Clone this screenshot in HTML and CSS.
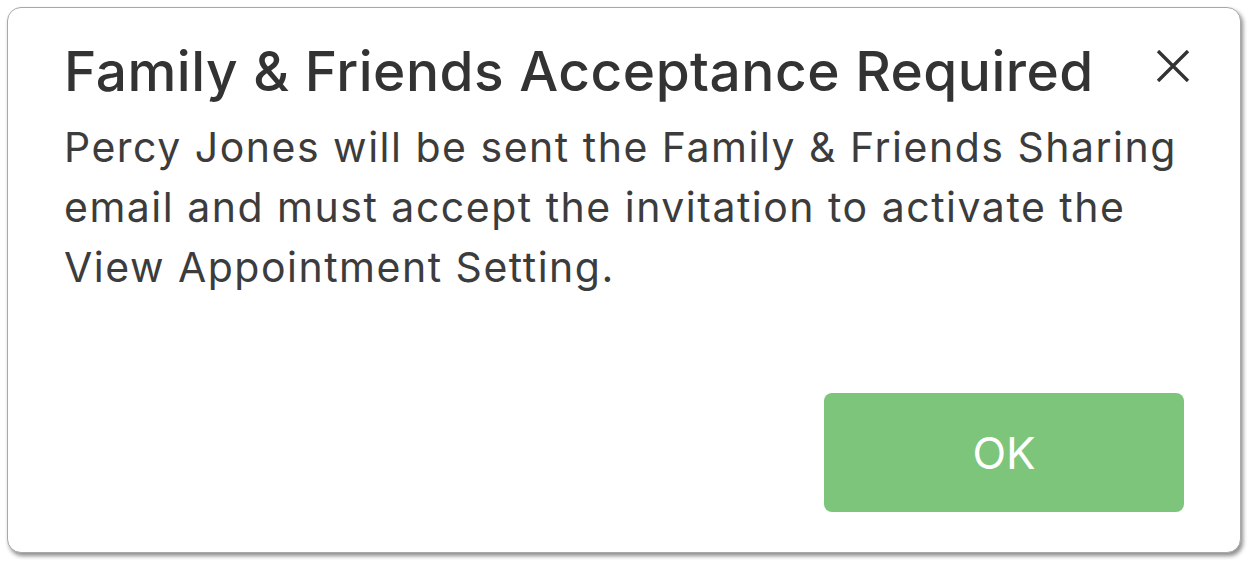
FILE: index.html
```html
<!DOCTYPE html>
<html lang="en">
<head>
    <meta charset="UTF-8">
    <meta name="viewport" content="width=device-width, initial-scale=1.0">
    <title>Family &amp; Friends Acceptance Required</title>
    <link rel="stylesheet" href="styles.css">
</head>
<body>
    <div class="dialog">
        <div class="dialog-header">
            <h2 class="dialog-title">Family &amp; Friends Acceptance Required</h2>
            <button class="close-button" aria-label="Close">
                <svg width="34" height="32" viewBox="0 0 34 32">
                    <path d="M2 1 L32 31 M32 1 L2 31" stroke="#333" stroke-width="3.4" fill="none"/>
                </svg>
            </button>
        </div>
        <p class="dialog-text">Percy Jones will be sent the Family &amp; Friends Sharing email and must accept the invitation to activate the View Appointment Setting.</p>
        <div class="dialog-footer">
            <button class="ok-button">OK</button>
        </div>
    </div>
</body>
</html>
```

FILE: styles.css
```css
body {
    margin: 0;
    padding: 7px;
    background-color: #ffffff;
    font-family: Inter, "Open Sans", sans-serif;
}
.dialog {
    box-sizing: border-box;
    width: 1234px;
    height: 546px;
    background-color: #fff;
    border: 1px solid #a8a8a8;
    border-radius: 14px;
    box-shadow: 2px 3px 4px rgba(0, 0, 0, 0.45);
    padding: 28px 56px 40px 56px;
    display: flex;
    flex-direction: column;
}
.dialog-header {
    display: flex;
    justify-content: space-between;
    align-items: flex-start;
}
.dialog-title {
    margin: 0;
    font-size: 55px;
    font-weight: 500;
    letter-spacing: 0.5px;
    color: #333;
    line-height: 70px;
}
.close-button {
    background: none;
    border: none;
    padding: 0;
    margin-top: 14px;
    margin-right: -6px;
    cursor: pointer;
}
.dialog-text {
    margin: 11px 0 0 0;
    font-size: 41px;
    line-height: 60px;
    letter-spacing: 1.5px;
    color: #3c3c3c;
}
.dialog-footer {
    margin-top: auto;
    display: flex;
    justify-content: flex-end;
}
.ok-button {
    width: 360px;
    height: 119px;
    background-color: #7dc57a;
    color: white;
    border: none;
    border-radius: 8px;
    font-family: Inter, sans-serif;
    font-size: 44px;
    cursor: pointer;
}
```
